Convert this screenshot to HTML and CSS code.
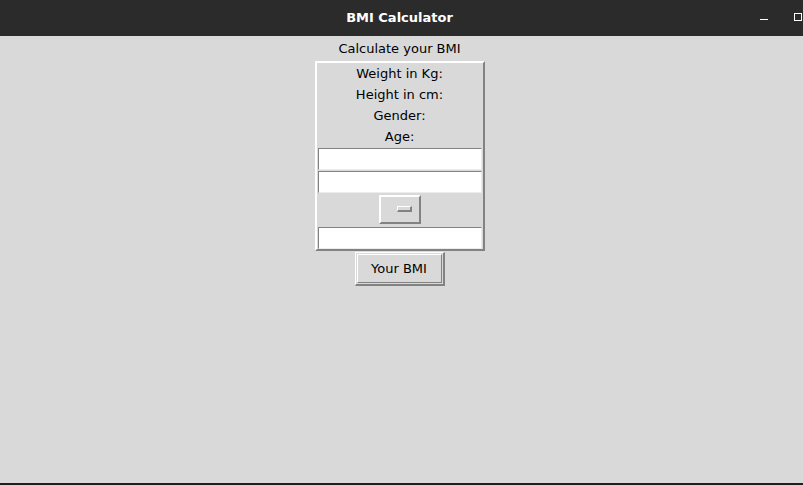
FILE: index.html
```html
<!DOCTYPE html>
<html>
<head>
<meta charset="utf-8">
<title>BMI Calculator</title>
<link rel="stylesheet" href="styles.css">
</head>
<body>
<div class="window">
  <header class="titlebar">
    <div class="tb-side"></div>
    <div class="tb-title">BMI Calculator</div>
    <div class="tb-controls">
      <span class="ctl-min"></span>
      <span class="ctl-max"></span>
    </div>
  </header>
  <main class="content">
    <div class="heading">Calculate your BMI</div>
    <div class="frame">
      <div class="lbl">Weight in Kg:</div>
      <div class="lbl">Height in cm:</div>
      <div class="lbl">Gender:</div>
      <div class="lbl">Age:</div>
      <input class="entry entry-first" type="text">
      <input class="entry" type="text">
      <div class="menubtn"><span class="indicator"></span></div>
      <input class="entry entry-last" type="text">
    </div>
    <div class="btn-outer"><div class="btn-inner">Your BMI</div></div>
  </main>
  <div class="bottom-edge"></div>
</div>
</body>
</html>
```
FILE: styles.css
```css
* { box-sizing: border-box; }
html, body { margin: 0; padding: 0; }
body {
  width: 803px;
  height: 485px;
  overflow: hidden;
  background: #d9d9d9;
  font-family: "DejaVu Sans", sans-serif;
  font-size: 13px;
  color: #000;
}
.window {
  display: flex;
  flex-direction: column;
  height: 485px;
}
.titlebar {
  height: 36px;
  background: #2b2b2b;
  display: grid;
  grid-template-columns: 1fr auto 1fr;
  align-items: center;
}
.tb-title {
  color: #fff;
  font-weight: bold;
  font-size: 13px;
  margin-right: 4px;
  padding-bottom: 1px;
}
.tb-controls {
  display: flex;
  justify-content: flex-end;
  align-items: center;
  gap: 26px;
  padding-right: 1px;
}
.ctl-min {
  width: 8px;
  height: 1px;
  background: #fff;
  margin-top: 3px;
}
.ctl-max {
  width: 8px;
  height: 8px;
  border: 1.5px solid #fff;
  margin-top: -2px;
}
.content {
  flex: 1;
  display: flex;
  flex-direction: column;
  align-items: center;
  padding-right: 4px;
}
.heading {
  height: 25px;
  padding-top: 1px;
  line-height: 24px;
  text-align: center;
}
.frame {
  width: 170px;
  height: 190px;
  border: 2px solid;
  border-color: #ffffff #828282 #828282 #ffffff;
  display: flex;
  flex-direction: column;
  align-items: center;
}
.lbl {
  height: 21px;
  line-height: 21px;
  text-align: center;
}
.entry {
  display: block;
  width: 164px;
  height: 22px;
  margin: 1px 0 0 0;
  padding: 0;
  background: #fff;
  border: 1px solid;
  border-color: #828282 #ececec #ececec #828282;
  outline: none;
  font: inherit;
}
.menubtn {
  width: 42px;
  height: 29px;
  margin-top: 2px;
  border: 2px solid;
  border-color: #ffffff #828282 #828282 #ffffff;
  display: flex;
  align-items: center;
  justify-content: flex-end;
  padding-right: 7px;
}
.indicator {
  width: 15px;
  height: 6px;
  border: 1px solid;
  border-color: #ffffff #828282 #828282 #ffffff;
  border-bottom-width: 2px;
  border-right-width: 2px;
  background: #d9d9d9;
  margin-bottom: 2px;
}
.entry-last { margin-top: 3px; }
.btn-outer {
  margin-top: 1px;
  width: 90px;
  height: 34px;
  border: 1px solid;
  border-color: #ffffff #828282 #828282 #ffffff;
  border-bottom-width: 2px;
  border-right-width: 2px;
  padding: 1px;
}
.btn-inner {
  height: 100%;
  border: 1px solid;
  border-color: #ffffff #828282 #828282 #ffffff;
  display: flex;
  align-items: center;
  justify-content: center;
  padding-bottom: 1px;
}
.bottom-edge {
  height: 2px;
  background: #1e1e1e;
}
```
